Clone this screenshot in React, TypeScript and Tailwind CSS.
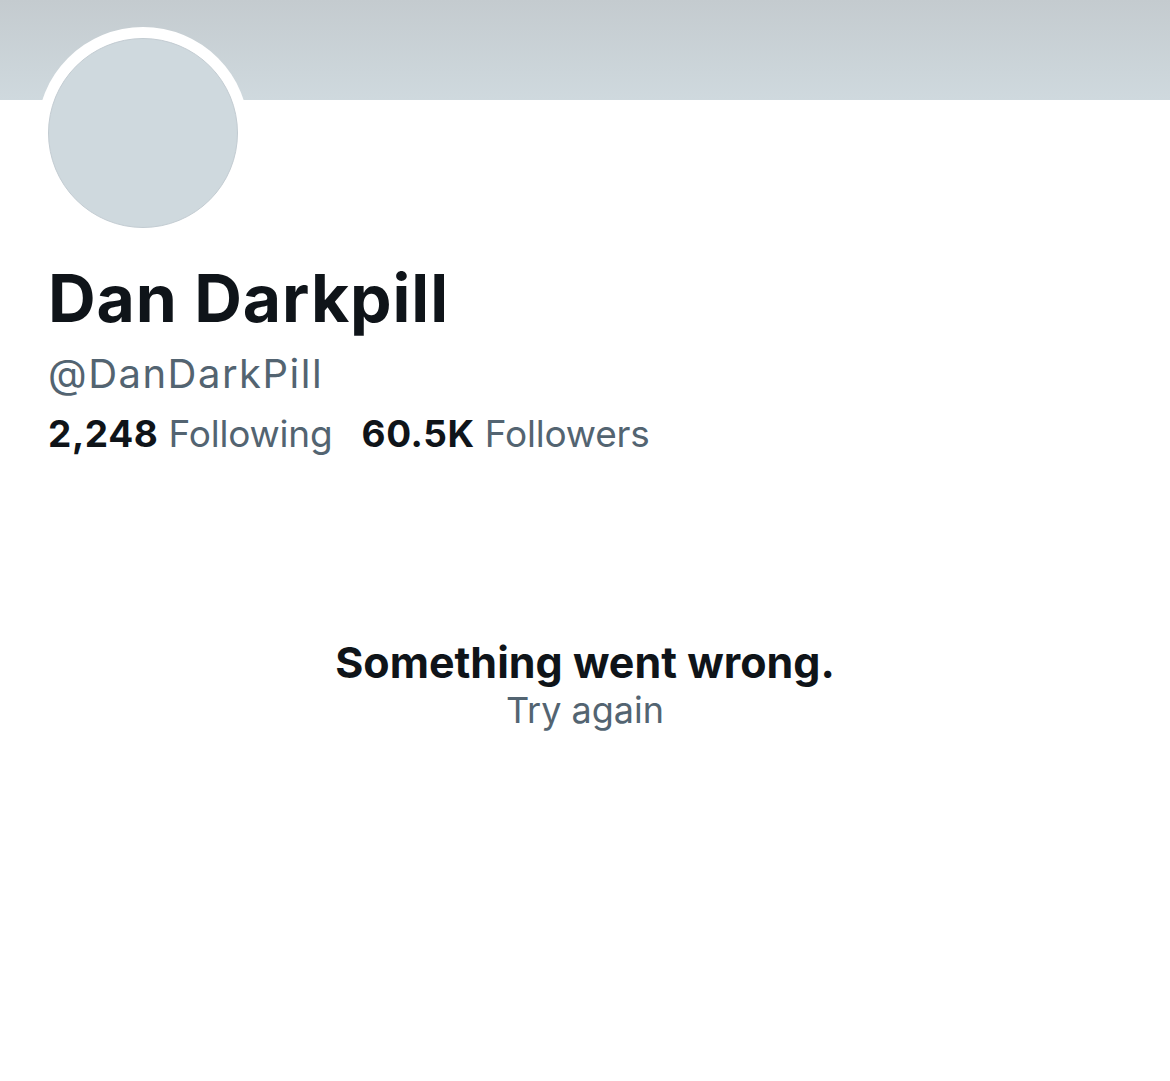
export default function App() {
  return (
    <div
      className="w-[1170px] h-[1081px] bg-white overflow-hidden"
      style={{ fontFamily: 'Inter, "Noto Sans", sans-serif' }}
    >
      <div className="h-[100px] bg-gradient-to-b from-[#c4cbcf] to-[#cfd9de]" />
      <div className="relative px-[48px]">
        <div className="absolute left-[37px] top-[-73px] w-[212px] h-[212px] rounded-full bg-white p-[11px]">
          <div className="w-full h-full rounded-full bg-[#cfd9de] border border-[#c3ccd2]" />
        </div>
        <div className="pt-[158px]">
          <div className="text-[66px] leading-[80px] font-bold text-[#0f1419] tracking-[0.9px]">
            Dan Darkpill
          </div>
          <div className="mt-[12px] text-[40px] leading-[48px] text-[#536471] tracking-[1.5px]">
            @DanDarkPill
          </div>
          <div className="mt-[14px] flex items-baseline text-[37px] leading-[44px]">
            <span className="font-bold text-[#0f1419] tracking-[0.6px]">2,248</span>
            <span className="ml-[10px] text-[#536471] tracking-[-0.2px]">Following</span>
            <span className="ml-[29px] font-bold text-[#0f1419] tracking-[0.6px]">60.5K</span>
            <span className="ml-[10px] text-[#536471] tracking-[-0.2px]">Followers</span>
          </div>
        </div>
      </div>
      <div className="mt-[180px] flex flex-col items-center">
        <div className="text-[43px] leading-[52px] font-bold text-[#0f1419]">Something went wrong.</div>
        <div className="text-[36px] leading-[44px] text-[#536471]">Try again</div>
      </div>
    </div>
  );
}
